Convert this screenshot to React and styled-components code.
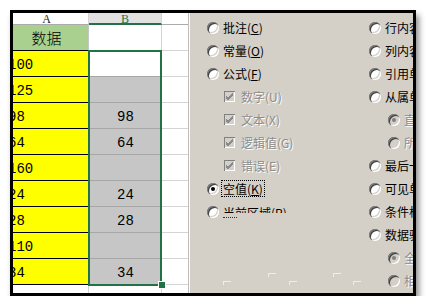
import styled, { createGlobalStyle, css } from "styled-components";

const GlobalStyle = createGlobalStyle`
  html, body {
    margin: 0;
    background: #ffffff;
  }
`;

const rows = [
    { a: "100", b: "", active: true },
    { a: "125", b: "" },
    { a: "98", b: "98" },
    { a: "64", b: "64" },
    { a: "160", b: "" },
    { a: "24", b: "24" },
    { a: "28", b: "28" },
    { a: "110", b: "" },
    { a: "34", b: "34" },
];

const leftOptions = [
    { kind: "radio", text: "批注", key: "C" },
    { kind: "radio", text: "常量", key: "O" },
    { kind: "radio", text: "公式", key: "F" },
    { kind: "check", text: "数字", key: "U" },
    { kind: "check", text: "文本", key: "X" },
    { kind: "check", text: "逻辑值", key: "G" },
    { kind: "check", text: "错误", key: "E" },
    { kind: "radio", text: "空值", key: "K", checked: true, focus: true },
];

const rightOptions = [
    { text: "行内容差异单元格", key: "W" },
    { text: "列内容差异单元格", key: "M" },
    { text: "引用单元格", key: "P" },
    { text: "从属单元格", key: "D" },
    { text: "直属", key: "I", sub: true, checked: true },
    { text: "所有级别", key: "L", sub: true },
    { text: "最后一个单元格", key: "S" },
    { text: "可见单元格", key: "Y" },
    { text: "条件格式", key: "T" },
    { text: "数据验证", key: "V" },
    { text: "全部", key: "L", sub: true, checked: true },
    { text: "相同", key: "E", sub: true },
];

const marks = [
    { gap: 33, low: true },
    { gap: 37 },
    { gap: 13, low: true },
    { gap: 36 },
    { gap: 12, low: true },
];

const App = () => {
    return (
        <Page>
            <GlobalStyle/>
            <Frame>
                <Sheet>
                    <HeaderCell $shift>A</HeaderCell>
                    <HeaderCell $selected>B</HeaderCell>
                    <HeaderCell $last/>

                    <Cell $kind="title"><TitleText>数据</TitleText></Cell>
                    <Cell $kind="white"/>
                    <Cell $kind="grid"/>

                    {rows.map((row) => (
                        <RowGroup key={row.a}>
                            <Cell $kind="yellow"><CutNumber>{row.a}</CutNumber></Cell>
                            <Cell $kind={row.active ? "active" : "gray"}>{row.b}</Cell>
                            <Cell $kind="grid"/>
                        </RowGroup>
                    ))}

                    <Cell $kind="blank"/>
                    <Cell $kind="blank"/>
                    <Cell $kind="end"/>

                    <Selection/>
                    <FillHandle/>
                </Sheet>

                <Dialog>
                    <LeftColumn>
                        {leftOptions.map((opt) => (
                            <OptionRow key={opt.text} $indent={opt.kind === "check" ? 34 : 17}>
                                {opt.kind === "check" ? <CheckBox><CheckMark/></CheckBox> : <Radio $checked={opt.checked}/>}
                                <Label $disabled={opt.kind === "check"} $focus={opt.focus}>
                                    {opt.text}(
                                    {opt.kind === "check" ? opt.key : <u>{opt.key}</u>}
                                    )
                                </Label>
                            </OptionRow>
                        ))}
                        <OptionRow $indent={17}>
                            <Radio/>
                            <ClipStack>
                                <ClipLabel>当前区域(R)</ClipLabel>
                                <DottedTrace/>
                            </ClipStack>
                        </OptionRow>
                        <MarkStrip>
                            {marks.map((m, i) => (
                                <ButtonEdge key={i} $gap={m.gap} $low={m.low}/>
                            ))}
                        </MarkStrip>
                    </LeftColumn>

                    <RightColumn>
                        {rightOptions.map((opt, i) => (
                            <OptionRow key={i} $indent={opt.sub ? 20 : 1}>
                                <Radio $checked={opt.checked} $disabled={opt.sub}/>
                                <Label $disabled={opt.sub}>
                                    {opt.text}(
                                    {opt.sub ? opt.key : <u>{opt.key}</u>}
                                    )
                                </Label>
                            </OptionRow>
                        ))}
                    </RightColumn>
                </Dialog>
            </Frame>
        </Page>
    );
};

const CheckMark = () => (
    <svg width="9" height="9" viewBox="0 0 9 9">
        <path d="M1 4 L3 6 L8 1 M1 5 L3 7 L8 2 M1 6 L3 8 L8 3" stroke="#8a8a8a" strokeWidth="1" fill="none"/>
    </svg>
);

const Page = styled.div`
    padding: 10px 0 0 10px;
`;

const Frame = styled.div`
    width: 400px;
    height: 280px;
    border: 3px solid #000;
    display: flex;
    overflow: hidden;
    box-shadow: 3px 5px 6px rgba(0, 0, 0, 0.45);
    background: #fff;
`;

const Sheet = styled.div`
    position: relative;
    display: grid;
    grid-template-columns: 76px 73px 26px;
    grid-template-rows: 12px 26px repeat(9, 26px) 8px;
    border-right: 1px solid #bdbdbd;
    font-family: "Liberation Mono", monospace;
    font-size: 14px;
    color: #000;
`;

const RowGroup = styled.div`
    display: contents;
`;

const HeaderCell = styled.div`
    box-sizing: border-box;
    background: ${(p) => (p.$selected ? "#e1e1e1" : "#fff")};
    color: ${(p) => (p.$selected ? "#217346" : "#222")};
    border-bottom: ${(p) => (p.$selected ? "2px solid #217346" : "1px solid #ababab")};
    border-right: ${(p) => (p.$last ? "none" : "1px solid #d4d4d4")};
    font-family: "Liberation Serif", serif;
    font-size: 12px;
    line-height: 12px;
    text-align: center;
    padding-right: ${(p) => (p.$shift ? "8px" : "0")};
    overflow: hidden;
`;

const kinds = {
    title: css`
        background: #a9d08e;
        border-bottom: 1px solid #000;
        border-right: 1px solid #c6c6c6;
    `,
    yellow: css`
        background: #ffff00;
        border-bottom: 1px solid #000;
        border-right: 1px solid #000;
        justify-content: flex-start;
    `,
    white: css`
        background: #fff;
        border-bottom: 1px solid #d4d4d4;
        border-right: 1px solid #d4d4d4;
    `,
    active: css`
        background: #fff;
        border-bottom: 1px solid #a6a6a6;
    `,
    gray: css`
        background: #c6c6c6;
        border-bottom: 1px solid #a6a6a6;
    `,
    grid: css`
        background: #fff;
        border-bottom: 1px solid #d4d4d4;
    `,
    blank: css`
        background: #fff;
        border-right: 1px solid #d4d4d4;
    `,
    end: css`
        background: #fff;
    `,
};

const Cell = styled.div`
    box-sizing: border-box;
    display: flex;
    align-items: center;
    justify-content: center;
    padding-top: 3px;
    overflow: hidden;
    white-space: nowrap;
    ${(p) => kinds[p.$kind]}
`;

const TitleText = styled.span`
    font-family: "Noto Sans CJK SC", sans-serif;
    font-size: 15px;
    font-weight: 300;
    margin-right: 8px;
    margin-top: -3px;
`;

const CutNumber = styled.span`
    margin-left: -5px;
`;

const Selection = styled.div`
    position: absolute;
    left: 75px;
    top: 37px;
    width: 74px;
    height: 236px;
    box-sizing: border-box;
    border: 2px solid #217346;
    pointer-events: none;
`;

const FillHandle = styled.div`
    position: absolute;
    left: 145px;
    top: 268px;
    width: 6px;
    height: 6px;
    background: #217346;
    border: 1px solid #fff;
`;

const Dialog = styled.div`
    flex: 1;
    display: grid;
    grid-template-columns: 178px 1fr;
    background: #d4d0c8;
    border-left: 1px solid #fff;
    padding-top: 3px;
    font-family: "Noto Sans CJK SC", sans-serif;
    font-size: 12px;
    color: #000;
    overflow: hidden;
`;

const LeftColumn = styled.div`
    display: flex;
    flex-direction: column;
`;

const RightColumn = styled.div`
    display: flex;
    flex-direction: column;
    overflow: hidden;
    white-space: nowrap;
`;

const OptionRow = styled.div`
    height: 23px;
    display: flex;
    align-items: center;
    gap: 4px;
    padding-left: ${(p) => p.$indent}px;
    white-space: nowrap;
`;

const Radio = styled.span`
    position: relative;
    flex: none;
    width: 12px;
    height: 12px;
    border-radius: 50%;
    background: ${(p) => (p.$disabled ? "#d4d0c8" : "#fff")};
    box-shadow:
        inset 1px 1px 0 #808080,
        inset 2px 2px 0 #404040,
        inset -1px -1px 0 #fff,
        inset -2px -2px 0 #d4d0c8;

    &::after {
        content: "";
        display: ${(p) => (p.$checked ? "block" : "none")};
        position: absolute;
        left: 4px;
        top: 4px;
        width: 4px;
        height: 4px;
        border-radius: 50%;
        background: ${(p) => (p.$disabled ? "#808080" : "#000")};
    }
`;

const CheckBox = styled.span`
    flex: none;
    width: 11px;
    height: 11px;
    margin-right: 2px;
    box-sizing: border-box;
    display: flex;
    align-items: center;
    justify-content: center;
    background: #d4d0c8;
    box-shadow:
        inset 1px 1px 0 #808080,
        inset -1px -1px 0 #fff;
`;

const Label = styled.span`
    line-height: 15px;
    padding: 0 1px;
    color: ${(p) => (p.$disabled ? "#8c8c8c" : "#000")};
    text-shadow: ${(p) => (p.$disabled ? "1px 1px 0 #ffffff" : "none")};
    outline: ${(p) => (p.$focus ? "1px dotted #000" : "none")};
    outline-offset: 0;
    margin-left: -1px;

    u {
        text-underline-offset: 1px;
    }
`;

const ClipStack = styled.span`
    display: flex;
    flex-direction: column;
    align-self: flex-start;
    margin-top: 5px;
`;

const ClipLabel = styled.span`
    height: 8px;
    line-height: 15px;
    overflow: hidden;
`;

const DottedTrace = styled.span`
    width: 14px;
    margin-top: 4px;
    border-top: 1px dotted #333;
`;

const MarkStrip = styled.div`
    display: flex;
    margin-top: 50px;
`;

const ButtonEdge = styled.span`
    width: 7px;
    height: 3px;
    margin-left: ${(p) => p.$gap}px;
    margin-top: ${(p) => (p.$low ? "8px" : "0")};
    border-top: 1px solid #f4f4f4;
    border-left: 1px solid #f4f4f4;
    opacity: 0.85;
`;

export default App;
